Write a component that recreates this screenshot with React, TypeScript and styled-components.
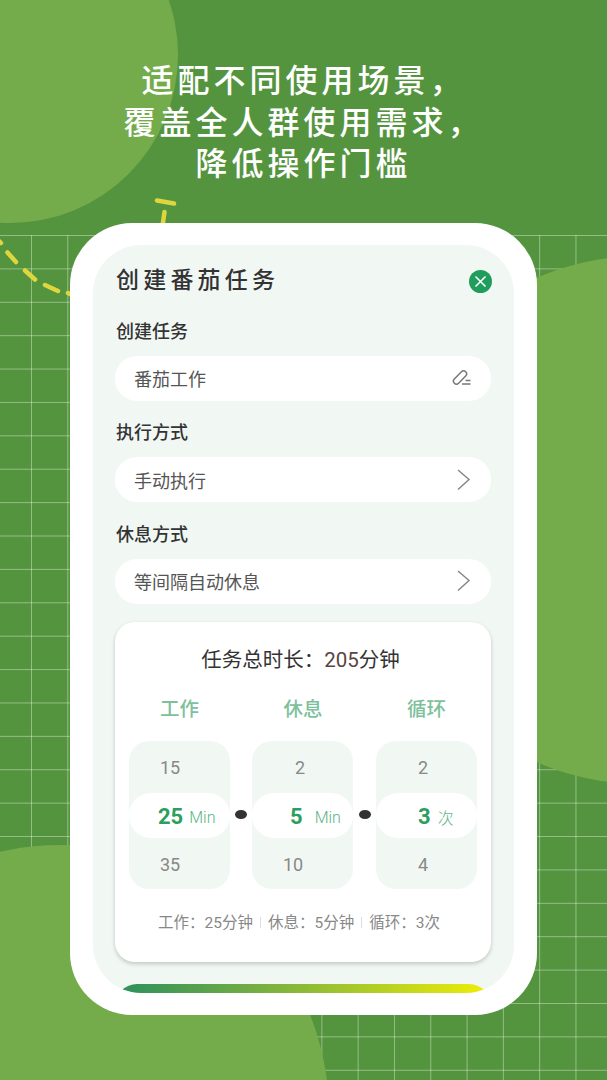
import styled, { createGlobalStyle } from "styled-components";

const GlobalStyle = createGlobalStyle`
  html, body {
    margin: 0;
    padding: 0;
    background: #54943e;
  }
  * {
    box-sizing: border-box;
  }
`;

const FONT = `Roboto, "Noto Sans CJK SC", sans-serif`;

const Page = styled.div`
  position: relative;
  width: 607px;
  height: 1080px;
  overflow: hidden;
  display: flex;
  flex-direction: column;
  align-items: center;
  padding-top: 61px;
  background: #54943e;
  font-family: ${FONT};
`;

const GridLayer = styled.div`
  position: absolute;
  left: 0;
  right: 0;
  top: 235px;
  bottom: 0;
  background-image: linear-gradient(
      to right,
      rgba(255, 255, 255, 0.38) 1.2px,
      transparent 1.2px
    ),
    linear-gradient(to bottom, rgba(255, 255, 255, 0.38) 1.2px, transparent 1.2px);
  background-size: 36.3px 33.4px;
  background-position: 31px 0;
`;

const Blob = styled.div<{ $x: number; $y: number; $r: number }>`
  position: absolute;
  left: ${(p) => p.$x - p.$r}px;
  top: ${(p) => p.$y - p.$r}px;
  width: ${(p) => p.$r * 2}px;
  height: ${(p) => p.$r * 2}px;
  border-radius: 50%;
  background: #74ac4b;
`;

const Dashes = styled.svg`
  position: absolute;
  left: 0;
  top: 0;
`;

const Headline = styled.h1`
  position: relative;
  margin: 0;
  width: 100%;
  color: #fff;
  font-size: 32px;
  font-weight: 500;
  line-height: 41.5px;
  letter-spacing: 4px;
  text-align: center;
`;

const PhoneCard = styled.div`
  position: relative;
  margin-top: 37px;
  width: 467px;
  height: 792px;
  padding: 22px 23px;
  background: #fff;
  border-radius: 62px;
`;

const Panel = styled.div`
  height: 748px;
  padding: 22px 23px 0 22px;
  background: #f1f8f3;
  border-radius: 48px;
  overflow: hidden;
`;

const TitleRow = styled.div`
  display: flex;
  align-items: center;
  justify-content: space-between;
  height: 28px;
  margin-bottom: 24px;
`;

const Title = styled.h2`
  margin: 0;
  padding-left: 1px;
  color: #333;
  font-size: 23px;
  font-weight: 500;
  letter-spacing: 4.2px;
  line-height: 28px;
`;

const CloseIcon = styled.svg`
  margin: 2px -1px 0 0;
`;

const Form = styled.div`
  display: flex;
  flex-direction: column;
  gap: 19.5px;
`;

const Group = styled.div`
  display: flex;
  flex-direction: column;
  gap: 12px;
`;

const Label = styled.div`
  padding: 1px 0 0 1px;
  color: #333;
  font-size: 18px;
  font-weight: 500;
  line-height: 24px;
`;

const Field = styled.div`
  display: flex;
  align-items: center;
  justify-content: space-between;
  height: 45px;
  padding: 0 20px 0 19px;
  background: #fff;
  border-radius: 22px;
  color: #555;
  font-size: 18px;
`;

const SummaryCard = styled.div`
  height: 340px;
  margin-top: 18px;
  padding-top: 24px;
  background: #fff;
  border-radius: 20px;
  box-shadow: 0 2px 4px rgba(0, 0, 0, 0.2);
`;

const Total = styled.div`
  padding-right: 5px;
  color: #333;
  font-size: 20.5px;
  line-height: 28px;
  text-align: center;
`;

const TotalValue = styled.span`
  color: #5a4545;
`;

const ColumnTitles = styled.div`
  display: grid;
  grid-template-columns: repeat(3, 101px);
  column-gap: 22.5px;
  margin-top: 23px;
  padding-left: 14px;
`;

const ColumnTitle = styled.div`
  color: #7dc09b;
  font-size: 19.5px;
  font-weight: 500;
  line-height: 26px;
  text-align: center;
`;

const Wheels = styled.div`
  display: grid;
  grid-template-columns: 101px 22px 101px 23px 101px;
  align-items: center;
  justify-items: center;
  margin-top: 18px;
  padding-left: 14px;
`;

const Wheel = styled.div`
  display: grid;
  grid-template-rows: 52px 45px 51px;
  width: 101px;
  height: 148px;
  background: #f1f8f3;
  border-radius: 20px;
  overflow: hidden;
`;

const WheelItem = styled.div<{ $left: number }>`
  display: flex;
  align-items: center;
  padding: 2px 0 0 ${(p) => p.$left}px;
  color: #888;
  font-size: 18px;
`;

const Selected = styled.div<{ $left: number; $gap: number }>`
  display: flex;
  align-items: center;
  gap: ${(p) => p.$gap}px;
  padding: 2px 0 0 ${(p) => p.$left}px;
  background: #fff;
  border-radius: 22px;
`;

const SelectedValue = styled.span`
  color: #2c9f5f;
  font-size: 22px;
  font-weight: 700;
`;

const Unit = styled.span`
  color: #5cb485;
  font-size: 16px;
  font-weight: 300;
  padding-top: 2px;
`;

const Dot = styled.div`
  width: 12px;
  height: 9px;
  border-radius: 50%;
  background: #333;
`;

const Breakdown = styled.div`
  display: flex;
  align-items: center;
  justify-content: center;
  gap: 7px;
  margin-top: 23px;
  padding-right: 8px;
  color: #888;
  font-size: 15.5px;
  line-height: 22px;
`;

const Separator = styled.span`
  width: 1px;
  height: 11px;
  background: #ddd;
`;

const StartButton = styled.div`
  height: 44px;
  margin-top: 22px;
  border-radius: 22px;
  background: linear-gradient(to right, #2b8f5c, #6fab45 35%, #f0ee05);
`;

function Chevron() {
  return (
    <svg width="14" height="22" viewBox="0 0 14 22" fill="none">
      <path d="M1 1 L12 10.5 L1 20.5" stroke="#888" strokeWidth="1.5" />
    </svg>
  );
}

function Pencil() {
  return (
    <svg width="20" height="18" viewBox="0 0 20 18" fill="none" stroke="#777" strokeWidth="1.5">
      <rect
        x="-8"
        y="-3"
        width="16"
        height="6"
        rx="3"
        transform="translate(9 8.5) rotate(-45)"
      />
      <path d="M14.5 11.5 H19.5 M11 15 H19.5" />
    </svg>
  );
}

function CloseButton() {
  return (
    <CloseIcon width="23" height="23" viewBox="0 0 23 23">
      <circle cx="11.5" cy="11.5" r="11.5" fill="#1f9d5c" />
      <path d="M6.5 6.5 L16.5 16.5 M16.5 6.5 L6.5 16.5" stroke="#fff" strokeWidth="1.6" />
    </CloseIcon>
  );
}

const fields = [
  { label: "创建任务", value: "番茄工作", icon: <Pencil /> },
  { label: "执行方式", value: "手动执行", icon: <Chevron /> },
  { label: "休息方式", value: "等间隔自动休息", icon: <Chevron /> },
];

function App() {
  return (
    <Page>
      <GlobalStyle />
      <GridLayer />
      <Blob $x={10} $y={55} $r={168} />
      <Blob $x={642} $y={520} $r={264} />
      <Blob $x={60} $y={1114} $r={269} />
      <Dashes width="607" height="320" viewBox="0 0 607 320" fill="none">
        <path
          d="M-1 241 L1 243 M7.5 252.5 L16 262 M25 270.5 L35 279.5 M45 285 L58 291 M68 293 L72 295 M157 200.5 L174 203.5 M164.5 212 L162.5 226"
          stroke="#dfd63f"
          strokeWidth="4.5"
          strokeLinecap="round"
        />
      </Dashes>
      <Headline>
        适配不同使用场景，
        <br />
        覆盖全人群使用需求，
        <br />
        降低操作门槛
      </Headline>
      <PhoneCard>
        <Panel>
          <TitleRow>
            <Title>创建番茄任务</Title>
            <CloseButton />
          </TitleRow>
          <Form>
            {fields.map((f) => (
              <Group key={f.label}>
                <Label>{f.label}</Label>
                <Field>
                  {f.value}
                  {f.icon}
                </Field>
              </Group>
            ))}
          </Form>
          <SummaryCard>
            <Total>
              任务总时长：<TotalValue>205</TotalValue>分钟
            </Total>
            <ColumnTitles>
              <ColumnTitle>工作</ColumnTitle>
              <ColumnTitle>休息</ColumnTitle>
              <ColumnTitle>循环</ColumnTitle>
            </ColumnTitles>
            <Wheels>
              <Wheel>
                <WheelItem $left={31}>15</WheelItem>
                <Selected $left={29} $gap={6}>
                  <SelectedValue>25</SelectedValue>
                  <Unit>Min</Unit>
                </Selected>
                <WheelItem $left={31}>35</WheelItem>
              </Wheel>
              <Dot />
              <Wheel>
                <WheelItem $left={43}>2</WheelItem>
                <Selected $left={38} $gap={12}>
                  <SelectedValue>5</SelectedValue>
                  <Unit>Min</Unit>
                </Selected>
                <WheelItem $left={31}>10</WheelItem>
              </Wheel>
              <Dot />
              <Wheel>
                <WheelItem $left={42}>2</WheelItem>
                <Selected $left={42} $gap={7}>
                  <SelectedValue>3</SelectedValue>
                  <Unit>次</Unit>
                </Selected>
                <WheelItem $left={42}>4</WheelItem>
              </Wheel>
            </Wheels>
            <Breakdown>
              <span>工作：25分钟</span>
              <Separator />
              <span>休息：5分钟</span>
              <Separator />
              <span>循环：3次</span>
            </Breakdown>
          </SummaryCard>
          <StartButton />
        </Panel>
      </PhoneCard>
    </Page>
  );
}

export default App;
